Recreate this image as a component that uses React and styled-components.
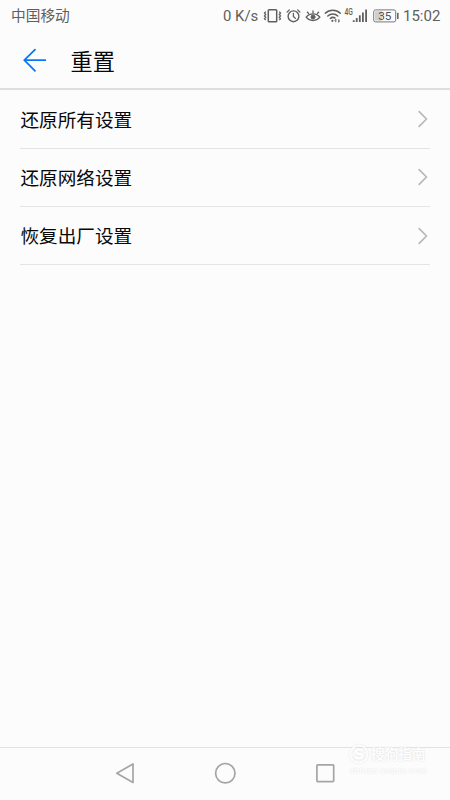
import React from 'react';
import styled, { createGlobalStyle } from 'styled-components';

const GlobalStyle = createGlobalStyle`
  * {
    box-sizing: border-box;
  }
  body {
    margin: 0;
    background: #fcfcfc;
    font-family: Roboto, 'Noto Sans CJK SC', sans-serif;
  }
`;

const Screen = styled.div`
  width: 450px;
  height: 800px;
  display: flex;
  flex-direction: column;
  overflow: hidden;
  background: #fcfcfc;
`;

const StatusBar = styled.div`
  height: 32px;
  padding: 0 10px 0 11px;
  display: flex;
  align-items: center;
  justify-content: space-between;
  color: #5f5f5f;
`;

const Carrier = styled.span`
  font-size: 14.7px;
  line-height: 32px;
`;

const StatusIcons = styled.div`
  width: 217px;
  height: 32px;
  display: flex;
  align-items: center;
`;

const StatusIcon = styled.span`
  flex: none;
  margin-right: ${(props) => props.$gap}px;

  svg {
    display: block;
  }
`;

const StatusText = styled.span`
  flex: none;
  width: ${(props) => props.$width}px;
  font-size: ${(props) => props.$size}px;
  line-height: 32px;
  white-space: nowrap;
`;

const Header = styled.header`
  height: 58px;
  padding: 0 22px;
  display: flex;
  align-items: center;
  gap: 23.5px;
  border-bottom: 2px solid #dedede;
`;

const Title = styled.h1`
  margin: 0;
  padding-top: 4px;
  font-size: 22.2px;
  font-weight: 400;
  line-height: 52px;
  color: #080808;
`;

const List = styled.ul`
  flex: 1;
  margin: 0;
  padding: 0.4px 20px 0;
  list-style: none;
`;

const Row = styled.li`
  height: 58.3px;
  display: flex;
  align-items: center;
  justify-content: space-between;
  border-bottom: 1px solid #e4e4e4;
`;

const RowLabel = styled.span`
  padding: 3px 0 0 0.5px;
  font-size: 18.6px;
  line-height: 28px;
  color: #080808;
`;

const NavBar = styled.nav`
  position: relative;
  height: 53px;
  padding: 0 113px 2px;
  display: flex;
  align-items: center;
  justify-content: space-between;
  border-top: 1px solid #e2e2e2;
`;

const Watermark = styled.div`
  position: absolute;
  top: -5px;
  left: 349px;
  width: 80px;
  color: #fff;
  text-shadow: 0 0 2px #e0e0e0, 0 0 3px #f0f0f0;
`;

const WatermarkBrand = styled.div`
  height: 22px;
  display: flex;
  align-items: center;
  gap: 2px;
  font-size: 13.6px;
  font-weight: 500;
  line-height: 22px;
  white-space: nowrap;

  svg {
    flex: none;
    filter: drop-shadow(0 0 1px #e0e0e0);
  }
`;

const WatermarkSite = styled.div`
  padding-left: 1px;
  font-size: 8px;
  font-weight: 500;
  letter-spacing: 0.7px;
  line-height: 11px;
  white-space: nowrap;
`;

const VibrateIcon = () => (
  <svg width="19" height="16" viewBox="0 0 19 16" fill="none" stroke="#5f5f5f">
    <rect x="5.3" y="1.7" width="8.4" height="12" rx="0.8" strokeWidth="1.5" />
    <path d="M2.7 3.6l-1.2 1.5 1.2 1.4-1.2 1.4 1.2 1.4-1.2 1.5 1.2 1.4M16.3 3.6l1.2 1.5-1.2 1.4 1.2 1.4-1.2 1.4 1.2 1.5-1.2 1.4" strokeWidth="1.3" />
  </svg>
);

const AlarmIcon = () => (
  <svg width="15" height="16" viewBox="0 0 15 16" fill="none" stroke="#5f5f5f" strokeLinecap="round">
    <circle cx="7.5" cy="8.3" r="5.4" strokeWidth="1.4" />
    <path d="M7.4 5.4v3l2 2M1.1 4.1l2.2-2.2M13.9 4.1l-2.2-2.2" strokeWidth="1.3" />
  </svg>
);

const EyeIcon = () => (
  <svg width="16" height="16" viewBox="0 0 16 16" fill="none" stroke="#5f5f5f" strokeLinecap="round">
    <path d="M1.2 9.2C4.5 4.8 11.5 4.8 14.8 9.2 11.5 13.6 4.5 13.6 1.2 9.2z" strokeWidth="1.4" />
    <circle cx="8" cy="9" r="2" fill="#5f5f5f" />
    <path d="M8 2.8v2M2.4 4.2l1.2 1.3M13.6 4.2l-1.2 1.3" strokeWidth="1.3" />
  </svg>
);

const WifiIcon = () => (
  <svg width="18" height="16" viewBox="0 0 18 16" fill="none" stroke="#5f5f5f" strokeLinecap="round">
    <path d="M1.3 5.3C5.5 1.3 12.1 1.3 16.3 5.3M3.8 8c2.8-2.7 7.2-2.7 10 0M6.3 10.5c1.3-1.2 3.1-1.4 4.6-.5" strokeWidth="1.5" />
    <circle cx="8.4" cy="12.8" r="1.1" fill="#5f5f5f" stroke="none" />
    <path d="M11.8 11.6v2.2M11 12.3l.8-.8M14.8 11.6v2.2M15.6 13l-.8.8" strokeWidth="1" />
  </svg>
);

const SignalIcon = () => (
  <svg width="24" height="18" viewBox="0 0 24 18" fill="#5f5f5f">
    <text transform="translate(0.4 8) scale(0.75 1)" fontSize="9" fontWeight="500">4G</text>
    <rect x="8.8" y="13.2" width="1.8" height="1.8" />
    <rect x="11.8" y="11" width="1.8" height="4" />
    <rect x="14.9" y="8.3" width="1.8" height="6.7" />
    <rect x="18" y="5.5" width="1.8" height="9.5" />
    <rect x="21.2" y="2.5" width="1.8" height="12.5" />
  </svg>
);

const BatteryIcon = () => (
  <svg width="26" height="14" viewBox="0 0 26 14">
    <rect x="0.7" y="0.9" width="22" height="12" rx="1.8" fill="#fcfcfc" stroke="#777" />
    <rect x="2" y="2.2" width="7" height="9.4" fill="#cecece" />
    <rect x="24" y="3.7" width="1.6" height="6.4" rx="0.6" fill="#666" />
    <text x="11.8" y="11" fontSize="11.8" textAnchor="middle" fill="#4f4f4f">35</text>
  </svg>
);

const BackArrow = () => (
  <svg width="25" height="24" viewBox="0 0 25 24" fill="none" stroke="#0878fa" strokeWidth="1.8" strokeLinecap="round" strokeLinejoin="round">
    <path d="M13 1.6L2.3 12.2 13 22.8M2.3 12.2H23.3" />
  </svg>
);

const Chevron = () => (
  <svg width="12" height="18" viewBox="0 0 12 18" fill="none" stroke="#b8b8b8" strokeWidth="1.7" strokeLinecap="round" strokeLinejoin="round">
    <path d="M1.2 1.7L8.5 9l-7.3 7.3" />
  </svg>
);

const NavIcon = ({ children }) => (
  <svg width="24" height="24" viewBox="0 0 24 24" fill="none" stroke="#a5a5a5" strokeWidth="1.7" strokeLinejoin="round">
    {children}
  </svg>
);

const items = ['还原所有设置', '还原网络设置', '恢复出厂设置'];

export default function App() {
  return (
    <>
      <GlobalStyle />
      <Screen>
        <StatusBar>
          <Carrier>中国移动</Carrier>
          <StatusIcons>
            <StatusText $width={40} $size={14.9}>0 K/s</StatusText>
            <StatusIcon $gap={4}><VibrateIcon /></StatusIcon>
            <StatusIcon $gap={4}><AlarmIcon /></StatusIcon>
            <StatusIcon $gap={3}><EyeIcon /></StatusIcon>
            <StatusIcon $gap={2}><WifiIcon /></StatusIcon>
            <StatusIcon $gap={5}><SignalIcon /></StatusIcon>
            <StatusIcon $gap={4}><BatteryIcon /></StatusIcon>
            <StatusText $width={37} $size={15}>15:02</StatusText>
          </StatusIcons>
        </StatusBar>
        <Header>
          <BackArrow />
          <Title>重置</Title>
        </Header>
        <List>
          {items.map((item) => (
            <Row key={item}>
              <RowLabel>{item}</RowLabel>
              <Chevron />
            </Row>
          ))}
        </List>
        <NavBar>
          <NavIcon>
            <path d="M3.8 12.2L20 3v18.5z" />
          </NavIcon>
          <NavIcon>
            <circle cx="12.3" cy="12.2" r="9.7" />
          </NavIcon>
          <NavIcon>
            <rect x="3.9" y="3.8" width="16.8" height="16.8" rx="0.8" />
          </NavIcon>
          <Watermark>
            <WatermarkBrand>
              <svg width="20" height="20" viewBox="0 0 20 20" fill="none" stroke="#fff">
                <circle cx="10" cy="10" r="8.5" strokeWidth="1.5" />
                <path d="M14 6.5C12 5 7 5 7 7.7c0 2.8 6.5 1.5 6.5 4.3 0 2.8-5 2.8-7.5 1" strokeWidth="2.2" />
              </svg>
              搜狗指南
            </WatermarkBrand>
            <WatermarkSite>zhinan.sogou.com</WatermarkSite>
          </Watermark>
        </NavBar>
      </Screen>
    </>
  );
}
